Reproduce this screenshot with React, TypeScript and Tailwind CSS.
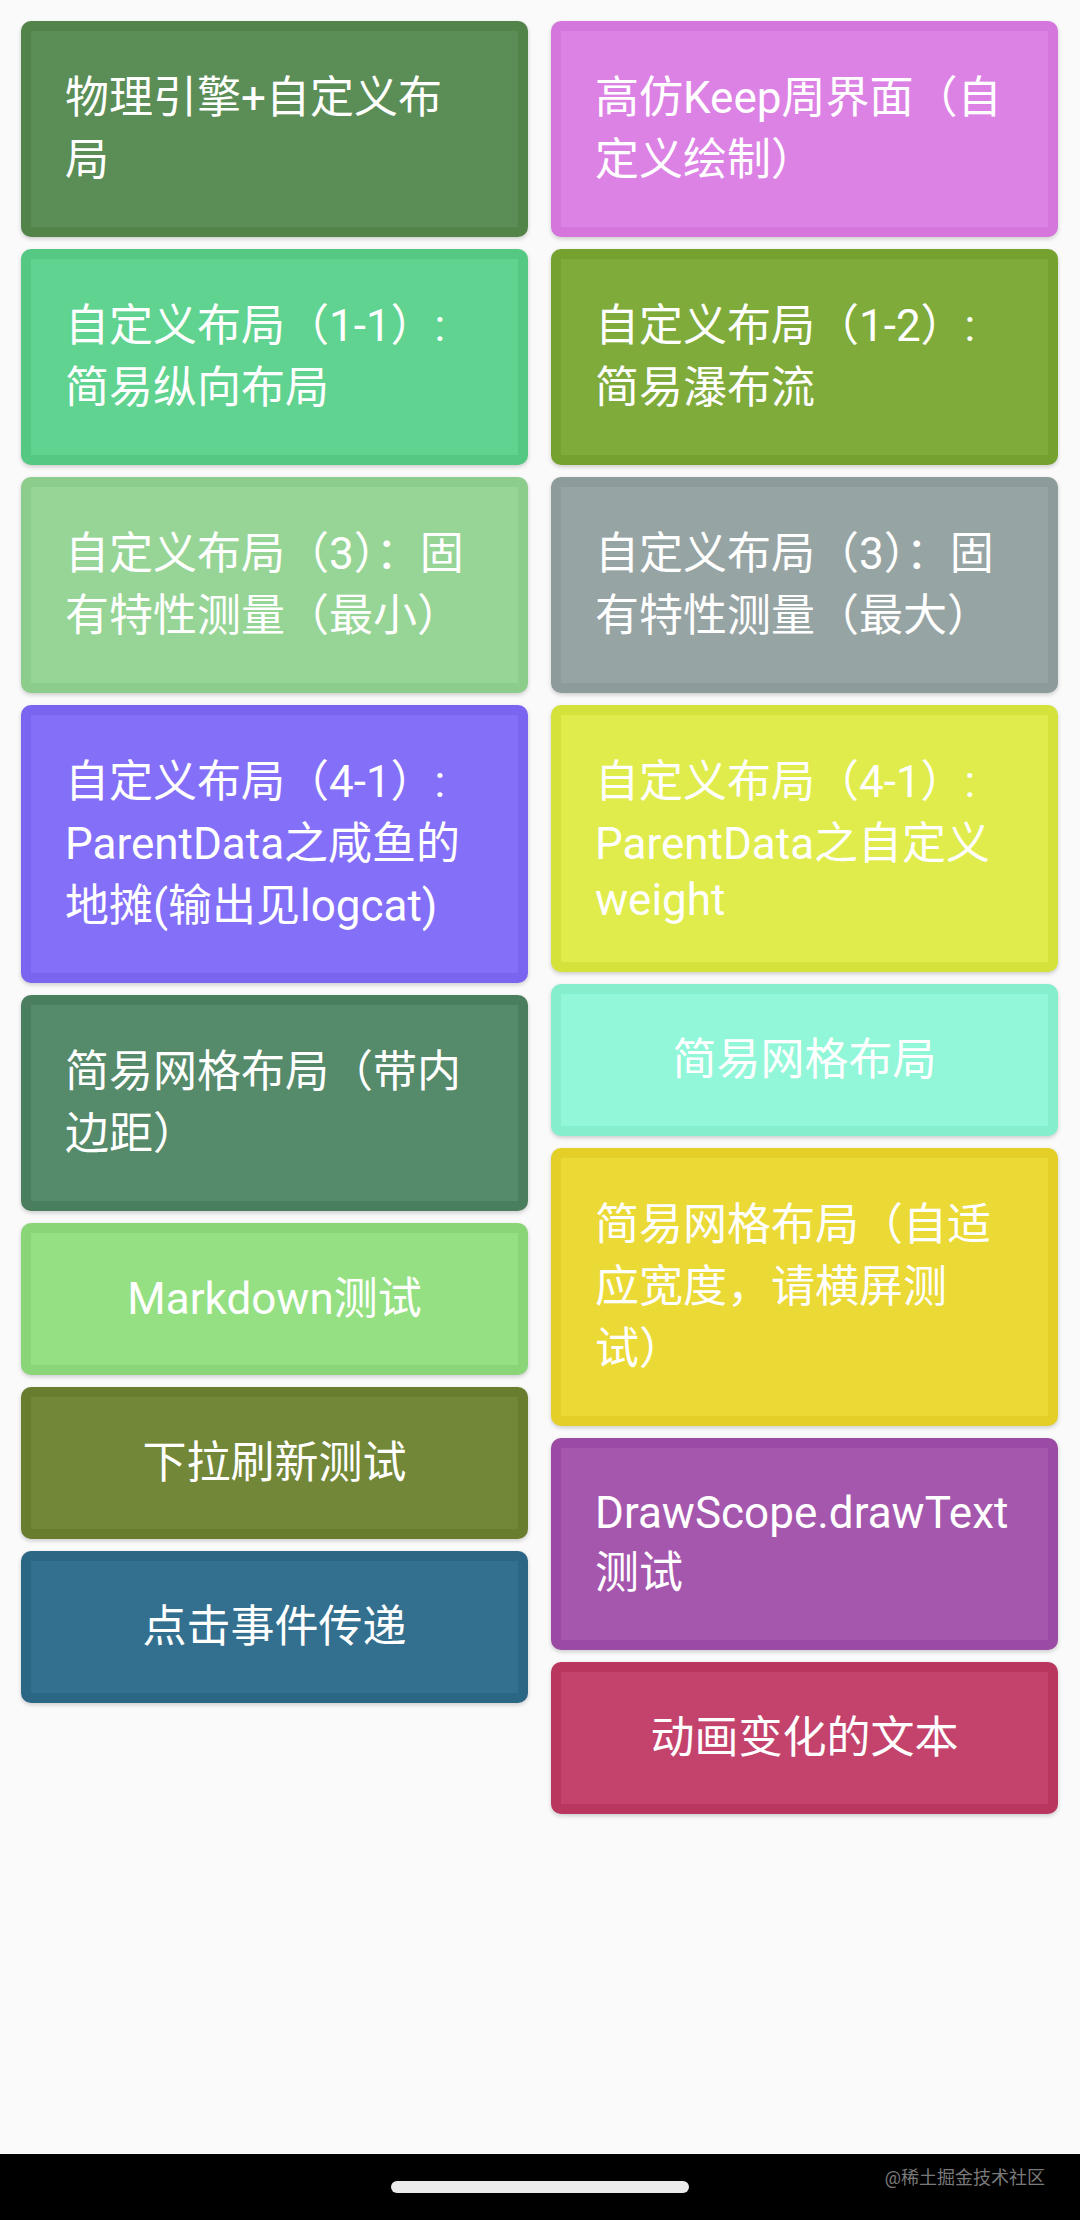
import React from 'react';

type Line = { t: string; lh?: string };
type Item = { lines: Line[]; bg: string; border: string };

const left: Item[] = [
  { lines: [{ t: '物理引擎+自定义布' }, { t: '局' }], bg: 'bg-[#5b8d56]', border: 'border-[#528349]' },
  { lines: [{ t: '自定义布局（1-1）:' }, { t: '简易纵向布局' }], bg: 'bg-[#60d390]', border: 'border-[#55c983]' },
  { lines: [{ t: '自定义布局（3）：固' }, { t: '有特性测量（最小）' }], bg: 'bg-[#97d597]', border: 'border-[#8ccd8c]' },
  {
    lines: [{ t: '自定义布局（4-1）:' }, { t: 'ParentData之咸鱼的' }, { t: '地摊(输出见logcat)' }],
    bg: 'bg-[#8470f8]',
    border: 'border-[#7a65f0]',
  },
  { lines: [{ t: '简易网格布局（带内' }, { t: '边距）' }], bg: 'bg-[#558a6a]', border: 'border-[#4b7e5f]' },
  { lines: [{ t: 'Markdown测试' }], bg: 'bg-[#94e083]', border: 'border-[#8ad578]' },
  { lines: [{ t: '下拉刷新测试' }], bg: 'bg-[#728738]', border: 'border-[#697d2f]' },
  { lines: [{ t: '点击事件传递' }], bg: 'bg-[#33708f]', border: 'border-[#2b6685]' },
];

const right: Item[] = [
  { lines: [{ t: '高仿Keep周界面（自' }, { t: '定义绘制）' }], bg: 'bg-[#dd82e5]', border: 'border-[#d576dc]' },
  { lines: [{ t: '自定义布局（1-2）:' }, { t: '简易瀑布流' }], bg: 'bg-[#7fab3b]', border: 'border-[#75a22f]' },
  { lines: [{ t: '自定义布局（3）：固' }, { t: '有特性测量（最大）' }], bg: 'bg-[#97a4a4]', border: 'border-[#8e9b9b]' },
  {
    lines: [{ t: '自定义布局（4-1）:' }, { t: 'ParentData之自定义' }, { t: 'weight', lh: 'leading-[51px]' }],
    bg: 'bg-[#dfec4b]',
    border: 'border-[#d5e23c]',
  },
  { lines: [{ t: '简易网格布局' }], bg: 'bg-[#92f7d9]', border: 'border-[#85efcd]' },
  {
    lines: [{ t: '简易网格布局（自适' }, { t: '应宽度，请横屏测' }, { t: '试）' }],
    bg: 'bg-[#ebd936]',
    border: 'border-[#e3cf28]',
  },
  {
    lines: [{ t: 'DrawScope.drawText', lh: 'leading-[58px]' }, { t: '测试' }],
    bg: 'bg-[#a557ae]',
    border: 'border-[#9b4ba4]',
  },
  { lines: [{ t: '动画变化的文本' }], bg: 'bg-[#c3436d]', border: 'border-[#b9375f]' },
];

function Card({ item }: { item: Item }) {
  const single = item.lines.length === 1;
  return (
    <div
      className={`rounded-[10px] border-[10px] ${item.border} ${item.bg} px-[34px] shadow-[0_2px_4px_rgba(0,0,0,0.18)] ${
        single ? 'py-[35px] text-center' : 'py-[36px] text-left'
      }`}
    >
      {item.lines.map((l, i) => (
        <div key={i} className={`whitespace-nowrap text-[44px] text-white ${l.lh ?? 'leading-[62px]'}`}>
          {l.t}
        </div>
      ))}
    </div>
  );
}

export default function App() {
  return (
    <div
      className="flex h-[2220px] w-[1080px] flex-col bg-[#fafafa]"
      style={{ fontFamily: 'Roboto, "Noto Sans CJK SC", sans-serif' }}
    >
      <div className="grid flex-1 grid-cols-2 items-start gap-x-[23px] pl-[21px] pr-[22px] pt-[21px]">
        <div className="flex flex-col gap-[12px]">
          {left.map((it, i) => (
            <Card key={i} item={it} />
          ))}
        </div>
        <div className="flex flex-col gap-[12px]">
          {right.map((it, i) => (
            <Card key={i} item={it} />
          ))}
        </div>
      </div>

      {/* system nav bar */}
      <div className="relative flex h-[66px] items-center justify-center bg-black">
        <div className="h-[12px] w-[298px] rounded-full bg-[#ebebeb]" />
        <span className="absolute right-[35px] top-[10px] text-[18px] text-[#7a7a7a]">@稀土掘金技术社区</span>
      </div>
    </div>
  );
}
